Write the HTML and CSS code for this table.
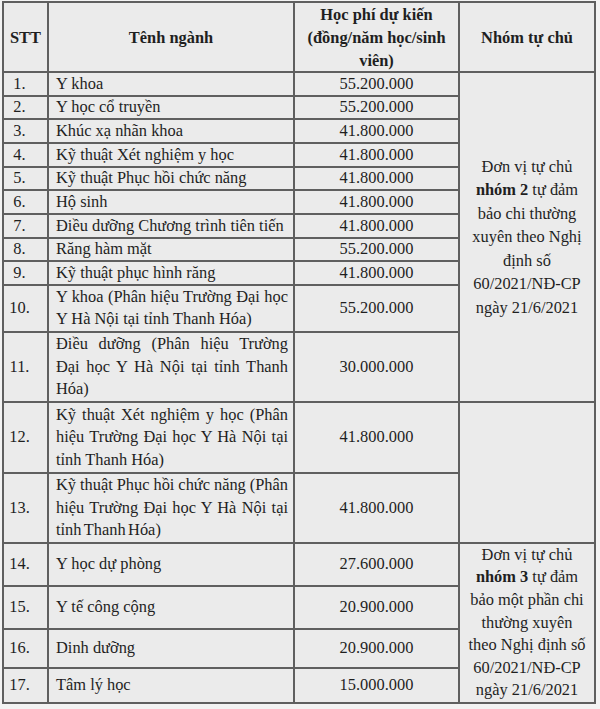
FILE: index.html
```
<!DOCTYPE html>
<html lang="vi">
<head>
<meta charset="utf-8">
<title>Học phí dự kiến</title>
<link rel="stylesheet" href="styles.css">
</head>
<body>
<div class="grid">
  <div class="cell head">STT</div>
  <div class="cell head">Tênh ngành</div>
  <div class="cell head">Học phí dự kiến (đồng/năm học/sinh viên)</div>
  <div class="cell head">Nhóm tự chủ</div>

  <div class="cell num">1.</div><div class="cell name"><span class="t">Y khoa</span></div><div class="cell fee">55.200.000</div>
  <div class="cell num">2.</div><div class="cell name"><span class="t">Y học cổ truyền</span></div><div class="cell fee">55.200.000</div>
  <div class="cell num">3.</div><div class="cell name"><span class="t">Khúc xạ nhãn khoa</span></div><div class="cell fee">41.800.000</div>
  <div class="cell num">4.</div><div class="cell name"><span class="t">Kỹ thuật Xét nghiệm y học</span></div><div class="cell fee">41.800.000</div>
  <div class="cell num">5.</div><div class="cell name"><span class="t">Kỹ thuật Phục hồi chức năng</span></div><div class="cell fee">41.800.000</div>
  <div class="cell num">6.</div><div class="cell name"><span class="t">Hộ sinh</span></div><div class="cell fee">41.800.000</div>
  <div class="cell num">7.</div><div class="cell name"><span class="t">Điều dưỡng Chương trình tiên tiến</span></div><div class="cell fee">41.800.000</div>
  <div class="cell num">8.</div><div class="cell name"><span class="t">Răng hàm mặt</span></div><div class="cell fee">55.200.000</div>
  <div class="cell num">9.</div><div class="cell name"><span class="t">Kỹ thuật phục hình răng</span></div><div class="cell fee">41.800.000</div>
  <div class="cell num">10.</div><div class="cell name"><span class="t">Y khoa (Phân hiệu Trường Đại học Y Hà Nội tại tỉnh Thanh Hóa)</span></div><div class="cell fee">55.200.000</div>
  <div class="cell num">11.</div><div class="cell name"><span class="t">Điều dưỡng (Phân hiệu Trường Đại học Y Hà Nội tại tỉnh Thanh Hóa)</span></div><div class="cell fee">30.000.000</div>
  <div class="cell num">12.</div><div class="cell name"><span class="t">Kỹ thuật Xét nghiệm y học (Phân hiệu Trường Đại học Y Hà Nội tại tỉnh Thanh Hóa)</span></div><div class="cell fee">41.800.000</div>
  <div class="cell num">13.</div><div class="cell name"><span class="t tight">Kỹ thuật Phục hồi chức năng (Phân hiệu Trường Đại học Y Hà Nội tại tỉnh Thanh Hóa)</span></div><div class="cell fee">41.800.000</div>
  <div class="cell num">14.</div><div class="cell name"><span class="t">Y học dự phòng</span></div><div class="cell fee">27.600.000</div>
  <div class="cell num">15.</div><div class="cell name"><span class="t">Y tế công cộng</span></div><div class="cell fee">20.900.000</div>
  <div class="cell num">16.</div><div class="cell name"><span class="t">Dinh dưỡng</span></div><div class="cell fee">20.900.000</div>
  <div class="cell num">17.</div><div class="cell name"><span class="t">Tâm lý học</span></div><div class="cell fee">15.000.000</div>

  <div class="cell group g1"><span class="gt">Đơn vị tự chủ<br><b>nhóm 2</b> tự đảm<br>bảo chi thường<br>xuyên theo Nghị<br>định số<br>60/2021/NĐ-CP<br>ngày 21/6/2021</span></div>
  <div class="cell group g-empty"></div>
  <div class="cell group g2"><span class="gt">Đơn vị tự chủ<br><b>nhóm 3</b> tự đảm<br>bảo một phần chi<br>thường xuyên<br>theo Nghị định số<br>60/2021/NĐ-CP<br>ngày 21/6/2021</span></div>
</div>
</body>
</html>
```
FILE: styles.css
```
html, body {
  margin: 0;
  padding: 0;
  background: #f3f3f3;
}

body {
  font-family: "Liberation Serif", "Times New Roman", serif;
  font-size: 16.4px;
  color: #1f1f1f;
}

.grid {
  display: grid;
  grid-template-columns: 43px 244px 163px 134px;
  grid-template-rows: 68px repeat(9, 21.67px) 45px 68px 69px 68px 41px 41px 37px 33px;
  gap: 2px;
  padding: 2px;
  width: max-content;
  margin: 1px 0 0 2px;
  background: #5f5f5f;
}

.cell {
  background: #ebebeb;
  display: flex;
  align-items: center;
  justify-content: center;
  line-height: 22.5px;
  text-align: center;
}

.head {
  font-weight: bold;
  line-height: 23px;
  padding: 0 4px;
}

.num {
  padding-right: 12px;
}

.name {
  justify-content: flex-start;
  padding: 0 5px 0 7px;
}

.name .t {
  display: block;
  width: 100%;
  text-align: justify;
}

.name .tight {
  word-spacing: -1.6px;
}

.group {
  padding: 0;
}

.gt {
  display: block;
  width: 100%;
  text-align: center;
  white-space: nowrap;
}

.g1 {
  grid-column: 4;
  grid-row: 2 / span 11;
  line-height: 23.5px;
}

.g-empty {
  grid-column: 4;
  grid-row: 13 / span 2;
}

.g2 {
  grid-column: 4;
  grid-row: 15 / span 4;
  line-height: 22.6px;
}
```
